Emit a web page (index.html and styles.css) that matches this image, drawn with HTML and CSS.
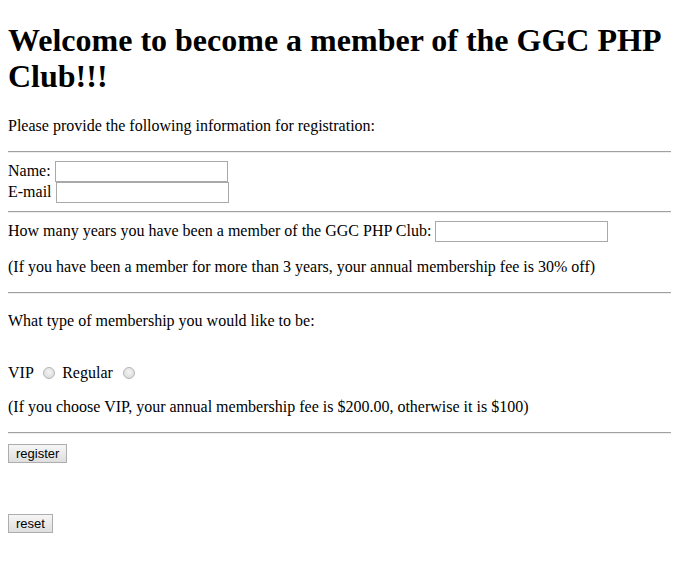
FILE: index.html
```html
<!DOCTYPE html>
<html>
<head>
<meta charset="utf-8">
<title>GGC PHP Club</title>
<link rel="stylesheet" href="styles.css">
</head>
<body class="page">
<h1 class="title">Welcome to become a member of the GGC PHP Club!!!</h1>
<form class="form">
<p class="para">Please provide the following information for registration:</p>
<hr class="rule">
Name: <input class="text-field" type="text" name="name"><br>
E-mail <input class="text-field" type="text" name="email"><br>
<hr class="rule">
How many years you have been a member of the GGC PHP Club: <input class="text-field" type="text" name="years">
<p class="para">(If you have been a member for more than 3 years, your annual membership fee is 30% off)</p>
<hr class="rule">
<p class="para para-type">What type of membership you would like to be:</p>
<br>
VIP <input class="radio" type="radio" name="type" value="vip"> Regular <input class="radio" type="radio" name="type" value="regular">
<p class="para">(If you choose VIP, your annual membership fee is $200.00, otherwise it is $100)</p>
<hr class="rule">
<input class="btn btn-register" type="submit" value="register">
<br><br><br>
<input class="btn btn-reset" type="reset" value="reset">
</form>
</body>
</html>
```
FILE: styles.css
```css
html { background: #fff; }
.page {
  margin: 8px;
  font-family: "Liberation Serif", "Times New Roman", serif;
  font-size: 16px;
  color: #000;
}
.title {
  font-size: 32px;
  font-weight: bold;
  margin: 14px 0 23px;
  line-height: 36px;
}
.form { margin: 0; }
.para { margin: 16px 0; }
.para-type { margin-top: 18px; }
.rule {
  border: none;
  border-top: 1px solid #a0a0a0;
  border-bottom: 1px solid #eee;
  margin: 8px 0;
  height: 0;
}
.text-field {
  box-sizing: border-box;
  width: 173px;
  height: 21px;
  border: 1px solid #a9a9a9;
  padding: 1px 2px;
  margin: 0;
  font-family: "Liberation Sans", Arial, sans-serif;
  font-size: 13px;
  vertical-align: baseline;
}
.radio {
  -webkit-appearance: none;
  appearance: none;
  box-sizing: border-box;
  width: 12px;
  height: 12px;
  border: 1px solid #b4b4b4;
  border-radius: 50%;
  background: radial-gradient(circle at 50% 40%, #f4f4f4 0%, #dcdcdc 80%);
  margin: 0 3px 0 6px;
  vertical-align: -1px;
}
.btn {
  box-sizing: border-box;
  font-family: "Liberation Sans", Arial, sans-serif;
  font-size: 13px;
  padding: 1px 7px;
  border: 1px solid #adadad;
  border-radius: 0;
  background: linear-gradient(#f6f6f6, #dedede);
  color: #000;
  height: 19px;
  margin: 0;
}
.btn-register { margin-top: 2px; }
.btn-reset { margin-top: 15px; }
```
